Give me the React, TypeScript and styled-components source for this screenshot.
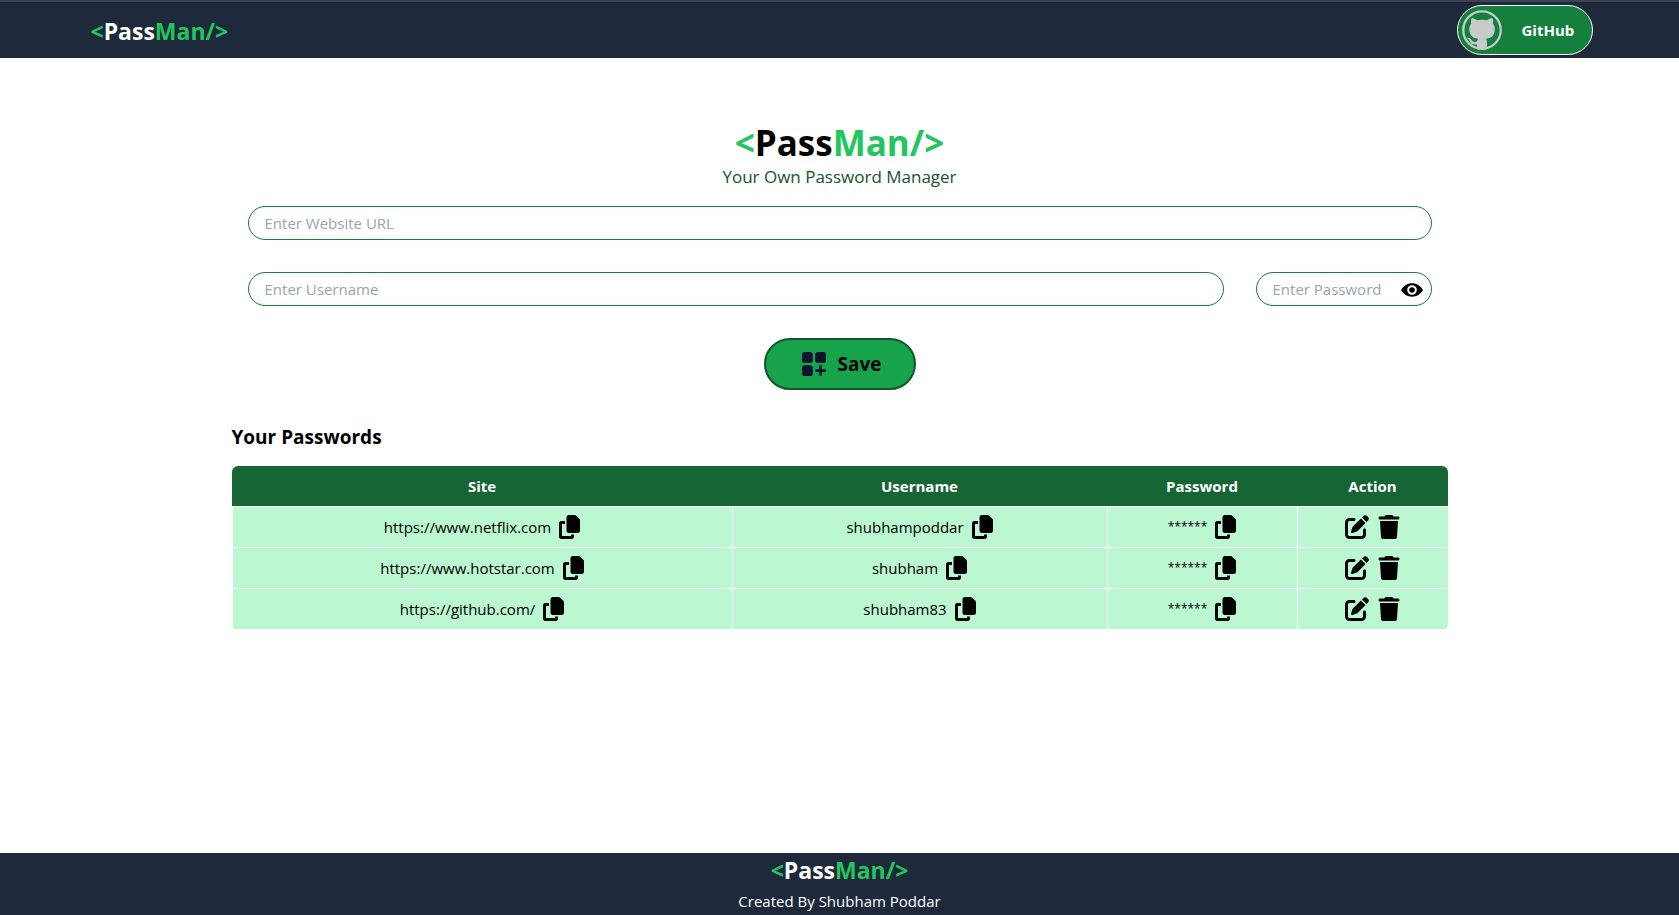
import React, { useState } from "react";
import styled, { createGlobalStyle } from "styled-components";
import { FaCopy, FaPenToSquare, FaTrash } from "react-icons/fa6";

const GlobalStyle = createGlobalStyle`
  *, *::before, *::after { box-sizing: border-box; }
  body {
    margin: 0;
    background: #fff;
    color: #000;
    font-family: "Segoe UI", "Open Sans", sans-serif;
    font-size: 15px;
    line-height: 24px;
  }
  h1, h2, p { margin: 0; }
  button, input { font: inherit; color: inherit; }
`;

const Page = styled.div`
  min-height: 100vh;
  display: flex;
  flex-direction: column;
`;

const Header = styled.header`
  background: #1e293b;
  border-top: 2px solid #3b4252;
`;

const HeaderInner = styled.div`
  max-width: 1536px;
  height: 56px;
  margin: 0 auto;
  padding: 0 15px 0 19px;
  display: flex;
  align-items: center;
  justify-content: space-between;
`;

const Brand = styled.div`
  padding-top: 2px;
  color: #fff;
  font-size: 23px;
  line-height: 30px;
  font-weight: 700;
`;

const Title = styled.h1`
  font-size: 35px;
  line-height: 40px;
  font-weight: 700;
  text-align: center;
`;

const Green = styled.span`
  color: #22c55e;
`;

const GithubLink = styled.a`
  display: flex;
  align-items: center;
  gap: 20px;
  width: 136px;
  height: 50px;
  padding: 0 4px;
  border: 1px solid #fff;
  border-radius: 25px;
  background: #15803d;
  color: #fff;
  font-weight: 700;
  text-decoration: none;
`;

const Main = styled.main`
  flex: 1;
  width: 100%;
  max-width: 1536px;
  margin: 0 auto;
  padding: 65px 160px;
`;

const Tagline = styled.p`
  color: #14532d;
  font-size: 17px;
  line-height: 28px;
  text-align: center;
`;

const Form = styled.form`
  display: flex;
  flex-direction: column;
  align-items: center;
  gap: 32px;
  padding: 15px 16px 16px;
`;

const FieldRow = styled.div`
  display: flex;
  gap: 32px;
  width: 100%;
`;

const Field = styled.input`
  width: 100%;
  height: 34px;
  padding: 4px 16px;
  border: 1px solid #15803d;
  border-radius: 17px;
  background: #fff;
  outline: none;
  &::placeholder { color: #9ca3af; opacity: 1; }
`;

const PasswordBox = styled.div`
  position: relative;
  flex: 0 0 176px;
`;

const IconButton = styled.button`
  display: inline-flex;
  padding: 0;
  border: 0;
  background: none;
  cursor: pointer;
`;

const EyeButton = styled(IconButton)`
  position: absolute;
  top: 7px;
  right: 9px;
`;

const SaveButton = styled.button`
  display: flex;
  align-items: center;
  justify-content: center;
  gap: 8px;
  width: 152px;
  height: 52px;
  padding: 0;
  border: 2px solid #14532d;
  border-radius: 26px;
  background: #16a34a;
  font-size: 19px;
  font-weight: 700;
  cursor: pointer;
`;

const SectionTitle = styled.h2`
  padding: 17px 0 15px;
  font-size: 19px;
  line-height: 28px;
  font-weight: 700;
`;

const TableFrame = styled.div`
  overflow: hidden;
  border-radius: 6px;
`;

const Table = styled.table`
  width: 100%;
  table-layout: fixed;
  border-collapse: collapse;
`;

const HeadCell = styled.th<{ $width: number }>`
  width: ${(p) => p.$width}px;
  padding: 8px 0;
  background: #166534;
  color: #fff;
  font-weight: 700;
`;

const Cell = styled.td`
  padding: 8px 0;
  border: 1px solid #fff;
  background: #bbf7d0;
`;

const CellContent = styled.div`
  display: flex;
  align-items: center;
  justify-content: center;
  gap: 8px;
  height: 24px;
`;

const Mask = styled.span`
  font-size: 12px;
`;

const Footer = styled.footer`
  display: flex;
  flex-direction: column;
  align-items: center;
  gap: 3px;
  background: #1e293b;
  color: #fff;
`;

const FooterNote = styled.p`
  line-height: 27px;
`;

function Wordmark() {
  return (
    <>
      <Green>&lt;</Green>Pass<Green>Man/&gt;</Green>
    </>
  );
}

function GithubIcon() {
  return (
    <svg width="40" height="40" viewBox="0 0 16 16" fill="#c9cbca" aria-hidden="true">
      <circle cx="8" cy="8" r="7.5" fill="none" stroke="#c9cbca" strokeWidth="0.9" />
      <path d="M6.02 15.8V15.21c0-.19-.01-.82-.01-1.49-2.01.37-2.53-.49-2.69-.94-.09-.23-.48-.94-.82-1.13-.28-.15-.68-.52-.01-.53.63-.01 1.08.58 1.23.82.72 1.21 1.87.87 2.33.66.07-.52.28-.87.51-1.07-1.78-.2-3.64-.89-3.64-3.95 0-.87.31-1.59.82-2.15-.08-.2-.36-1.02.08-2.12 0 0 .67-.21 2.2.82.64-.18 1.32-.27 2-.27s1.36.09 2 .27c1.53-1.04 2.2-.82 2.2-.82.44 1.1.16 1.92.08 2.12.51.56.82 1.27.82 2.15 0 3.07-1.87 3.75-3.65 3.95.29.25.54.73.54 1.48 0 1.07-.01 1.93-.01 2.2V15.8Z" />
    </svg>
  );
}

function EyeIcon() {
  return (
    <svg width="22" height="22" viewBox="0 0 22 22" aria-hidden="true">
      <path d="M0 11C2.6 6.7 6.4 4.3 11 4.3S19.4 6.7 22 11C19.4 15.3 15.6 17.7 11 17.7S2.6 15.3 0 11Z" />
      <circle cx="11" cy="11" r="3.8" fill="none" stroke="#fff" strokeWidth="2" />
    </svg>
  );
}

function AddIcon() {
  return (
    <svg width="32" height="32" viewBox="0 0 32 32" fill="#121331" aria-hidden="true">
      <rect x="4" y="4" width="10.8" height="10.8" rx="2.6" />
      <rect x="17.2" y="4" width="10.8" height="10.8" rx="2.6" />
      <rect x="4" y="17.2" width="10.8" height="10.8" rx="2.6" />
      <path d="M22.6 18.400v8.400M18.400 22.600h8.400" stroke="#121331" strokeWidth="2.6" strokeLinecap="round" />
    </svg>
  );
}

function CopyButton({ label }: { label: string }) {
  return (
    <IconButton type="button" aria-label={label}>
      <FaCopy width={21} height={24} size="" />
    </IconButton>
  );
}

const entries = [
  { site: "https://www.netflix.com", username: "shubhampoddar" },
  { site: "https://www.hotstar.com", username: "shubham" },
  { site: "https://github.com/", username: "shubham83" },
];

const CopyCell = styled(Cell)`
  svg {
    width: 21px;
    height: 24px;
  }
`;

export default function App() {
  const [visible, setVisible] = useState(false);
  return (
    <Page>
      <GlobalStyle />
      <Header>
        <HeaderInner>
          <Brand><Wordmark /></Brand>
          <GithubLink href="#github"><GithubIcon />GitHub</GithubLink>
        </HeaderInner>
      </Header>
      <Main>
        <Title><Wordmark /></Title>
        <Tagline>Your Own Password Manager</Tagline>
        <Form onSubmit={(e) => e.preventDefault()}>
          <Field aria-label="Website URL" placeholder="Enter Website URL" />
          <FieldRow>
            <Field aria-label="Username" placeholder="Enter Username" />
            <PasswordBox>
              <Field aria-label="Password" type={visible ? "text" : "password"} placeholder="Enter Password" />
              <EyeButton type="button" aria-label="Show password" onClick={() => setVisible(!visible)}>
                <EyeIcon />
              </EyeButton>
            </PasswordBox>
          </FieldRow>
          <SaveButton type="submit"><AddIcon />Save</SaveButton>
        </Form>
        <SectionTitle>Your Passwords</SectionTitle>
        <TableFrame>
          <Table>
            <thead>
              <tr>
                <HeadCell $width={500}>Site</HeadCell>
                <HeadCell $width={375}>Username</HeadCell>
                <HeadCell $width={190}>Password</HeadCell>
                <HeadCell $width={151}>Action</HeadCell>
              </tr>
            </thead>
            <tbody>
              {entries.map((entry) => (
                <tr key={entry.site}>
                  <CopyCell><CellContent>{entry.site}<CopyButton label="Copy site" /></CellContent></CopyCell>
                  <CopyCell><CellContent>{entry.username}<CopyButton label="Copy username" /></CellContent></CopyCell>
                  <CopyCell><CellContent><Mask>******</Mask><CopyButton label="Copy password" /></CellContent></CopyCell>
                  <Cell>
                    <CellContent>
                      <IconButton type="button" aria-label="Edit"><FaPenToSquare size={24} /></IconButton>
                      <IconButton type="button" aria-label="Delete"><FaTrash size={24} /></IconButton>
                    </CellContent>
                  </Cell>
                </tr>
              ))}
            </tbody>
          </Table>
        </TableFrame>
      </Main>
      <Footer>
        <Brand><Wordmark /></Brand>
        <FooterNote>Created By Shubham Poddar</FooterNote>
      </Footer>
    </Page>
  );
}
